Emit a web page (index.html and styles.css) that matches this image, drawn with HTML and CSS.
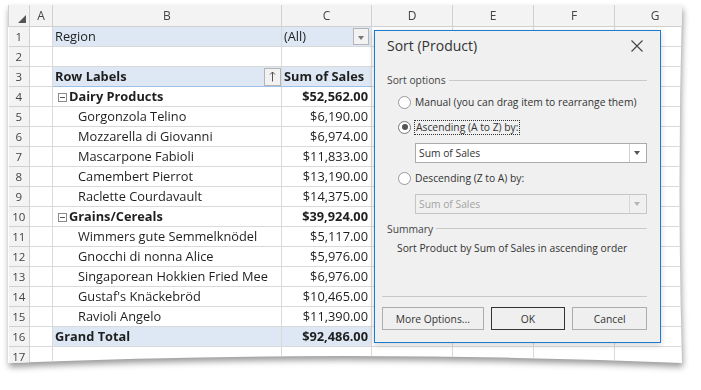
FILE: index.html
```html
<!DOCTYPE html>
<html>
<head>
<meta charset="utf-8">
<link rel="stylesheet" href="styles.css">
</head>
<body>
<div class="stage">
  <div class="paper">
    <div class="sheet">
      <table class="grid">
        <colgroup>
          <col class="c-num"><col class="c-a"><col class="c-b"><col class="c-c"><col class="c-d"><col class="c-d"><col class="c-d"><col class="c-d">
        </colgroup>
        <thead>
          <tr><th class="corner"><span class="tri"></span></th><th>A</th><th>B</th><th>C</th><th>D</th><th>E</th><th>F</th><th>G</th></tr>
        </thead>
        <tbody>
          <tr><th>1</th><td></td><td class="pv">Region</td><td class="pv pv-r"><span class="flt">(All)</span><span class="ddbtn"><span class="dtri"></span></span></td><td></td><td></td><td></td><td></td></tr>
          <tr><th>2</th><td></td><td></td><td></td><td></td><td></td><td></td><td></td></tr>
          <tr class="hdr"><th>3</th><td></td><td class="pv b"><span class="flt">Row Labels</span><span class="sortbtn"><svg width="7" height="11" viewBox="0 0 7 11"><path d="M3.5 1V10.5M1 3.5L3.5 1L6 3.5" stroke="#555" stroke-width="1" fill="none"/></svg></span></td><td class="pv b">Sum of Sales</td><td></td><td></td><td></td><td></td></tr>
          <tr class="cat"><th>4</th><td></td><td class="b"><span class="tog"></span>Dairy Products</td><td class="b num">$52,562.00</td><td></td><td></td><td></td><td></td></tr>
          <tr><th>5</th><td></td><td class="item">Gorgonzola Telino</td><td class="num">$6,190.00</td><td></td><td></td><td></td><td></td></tr>
          <tr><th>6</th><td></td><td class="item">Mozzarella di Giovanni</td><td class="num">$6,974.00</td><td></td><td></td><td></td><td></td></tr>
          <tr><th>7</th><td></td><td class="item">Mascarpone Fabioli</td><td class="num">$11,833.00</td><td></td><td></td><td></td><td></td></tr>
          <tr><th>8</th><td></td><td class="item">Camembert Pierrot</td><td class="num">$13,190.00</td><td></td><td></td><td></td><td></td></tr>
          <tr><th>9</th><td></td><td class="item">Raclette Courdavault</td><td class="num">$14,375.00</td><td></td><td></td><td></td><td></td></tr>
          <tr class="cat"><th>10</th><td></td><td class="b"><span class="tog"></span>Grains/Cereals</td><td class="b num">$39,924.00</td><td></td><td></td><td></td><td></td></tr>
          <tr><th>11</th><td></td><td class="item">Wimmers gute Semmelknödel</td><td class="num">$5,117.00</td><td></td><td></td><td></td><td></td></tr>
          <tr><th>12</th><td></td><td class="item">Gnocchi di nonna Alice</td><td class="num">$5,976.00</td><td></td><td></td><td></td><td></td></tr>
          <tr><th>13</th><td></td><td class="item">Singaporean Hokkien Fried Mee</td><td class="num">$6,976.00</td><td></td><td></td><td></td><td></td></tr>
          <tr><th>14</th><td></td><td class="item">Gustaf's Knäckebröd</td><td class="num">$10,465.00</td><td></td><td></td><td></td><td></td></tr>
          <tr><th>15</th><td></td><td class="item">Ravioli Angelo</td><td class="num">$11,390.00</td><td></td><td></td><td></td><td></td></tr>
          <tr class="tot"><th>16</th><td></td><td class="pv b">Grand Total</td><td class="pv b num">$92,486.00</td><td></td><td></td><td></td><td></td></tr>
          <tr><th>17</th><td></td><td></td><td></td><td></td><td></td><td></td><td></td></tr>
        </tbody>
      </table>
    </div>
  </div>

  <div class="dialog">
    <div class="d-title">
      <span>Sort (Product)</span>
      <svg class="d-close" width="12" height="12" viewBox="0 0 12 12"><path d="M0.5 0.5L11.5 11.5M11.5 0.5L0.5 11.5" stroke="#444" stroke-width="1.1" fill="none"/></svg>
    </div>
    <div class="grp"><span>Sort options</span><i></i></div>
    <div class="radio r1"><span class="rb"></span><span>Manual (you can drag item to rearrange them)</span></div>
    <div class="radio r2"><span class="rb on"></span><span class="focus">Ascending (A to Z) by:</span></div>
    <div class="combo"><span class="cv">Sum of Sales</span><span class="cbtn"><span class="ctri"></span></span></div>
    <div class="radio r3"><span class="rb"></span><span>Descending (Z to A) by:</span></div>
    <div class="combo dis"><span class="cv">Sum of Sales</span><span class="cbtn"><span class="ctri"></span></span></div>
    <div class="grp g2"><span>Summary</span><i></i></div>
    <div class="sum">Sort Product by Sum of Sales in ascending order</div>
    <div class="foot">
      <div class="sep"></div>
      <div class="btns">
        <span class="btn more">More Options...</span>
        <span class="btn ok">OK</span>
        <span class="btn">Cancel</span>
      </div>
    </div>
  </div>
</div>
</body>
</html>
```

FILE: styles.css
```css
* { box-sizing: border-box; }
html, body { margin: 0; padding: 0; background: #fff; }
body { width: 701px; height: 390px; overflow: hidden; }

.stage { position: relative; width: 701px; height: 390px; padding: 5px 0 0 8px; }

.paper { filter: drop-shadow(1px 4px 3px rgba(0,0,0,0.4)); width: 674px; height: 360px; }
.sheet {
  width: 674px; height: 360px; background: #fff; overflow: hidden;
  clip-path: path("M0 0 H674 Q669 180 674 358 Q337 344 0 358 Z");
}

.grid {
  border-collapse: collapse; table-layout: fixed; width: 687px;
  font-family: "Open Sans", "Noto Sans", sans-serif; font-size: 12.8px; color: #1e1e1e;
}
.c-num { width: 21px; } .c-a { width: 23px; } .c-b { width: 229px; } .c-c { width: 90px; } .c-d { width: 81px; }

.grid th, .grid td { border: 1px solid #d9d9d9; padding: 0; white-space: nowrap; overflow: hidden; }
.grid thead th { height: 21px; background: #f3f3f3; font-weight: normal; color: #444; font-size: 12px; text-align: center; border-color: #d0d0d0; border-top: none; }
.grid tbody th { height: 20px; background: #f3f3f3; font-weight: normal; color: #444; font-size: 11.5px; text-align: center; border-color: #d0d0d0; border-left: none; }
.grid td { height: 20px; padding: 0 2px; line-height: 18px; }

.corner { position: relative; }
.tri { position: absolute; right: 3px; bottom: 3px; width: 0; height: 0; border-left: 8px solid transparent; border-bottom: 8px solid #555; }

.pv { background: #dde8f4; }
.b { font-weight: bold; }
.num { text-align: right; padding-right: 3px !important; }
.item { padding-left: 25px !important; }

.pv-r { position: relative; }
.flt { display: inline-block; }
.ddbtn { position: absolute; right: 2px; top: 1px; width: 16px; height: 17px; border: 1px solid #b5b5b5; background: #f2f2f2; }
.dtri { position: absolute; left: 4px; top: 7px; border-left: 3.5px solid transparent; border-right: 3.5px solid transparent; border-top: 4px solid #777; }
.hdr td.pv:nth-child(3) { position: relative; }
.sortbtn { position: absolute; right: 0; top: 1px; width: 17px; height: 18px; border: 1px solid #b5b5b5; background: #f2f2f2; display: flex; align-items: center; justify-content: center; }

.hdr td.pv { border-bottom: 1px solid #9fc0e4; }
.cat td:nth-child(3), .cat td:nth-child(4) { border-top: 1px solid #a9c6e8; }
.tot td.pv { border-top: 1px solid #9fc0e4; }

.tog { display: inline-block; width: 9px; height: 9px; border: 1px solid #8a8a8a; margin: 0 2px 0 3px; position: relative; vertical-align: -1px; }
.tog::after { content: ""; position: absolute; left: 1px; right: 1px; top: 3px; height: 1px; background: #555; }

/* dialog */
.dialog {
  position: absolute; left: 374px; top: 30px; width: 287px; height: 313px;
  background: #f0f0f0; border: 1px solid #1c7ad0;
  box-shadow: 0 2px 6px rgba(0,0,0,0.18);
  font-family: "Open Sans", "Noto Sans", sans-serif; font-size: 10.3px; color: #333;
  display: flex; flex-direction: column;
}
.d-title { height: 30px; line-height: 30px; padding-left: 12px; font-size: 14px; color: #333; position: relative; }
.d-close { position: absolute; left: 256px; top: 9px; }

.grp { height: 20px; margin-top: 9px; padding-left: 12px; padding-right: 13px; display: flex; align-items: center; gap: 3px; color: #444; }
.grp i { flex: 1; height: 1px; background: #c9c9c9; }
.g2 { margin-top: 5px; height: 19px; }

.radio { height: 20px; display: flex; align-items: center; padding-left: 23px; gap: 4px; color: #333; }
.r1 { margin-top: 2px; }
.r2 { margin-top: 5px; }
.r3 { margin-top: 5px; }
.rb { width: 13px; height: 13px; border-radius: 50%; border: 1px solid #999; background: #fff; position: relative; flex: none; }
.rb.on { border-color: #777; }
.rb.on::after { content: ""; position: absolute; left: 2.5px; top: 2.5px; width: 6px; height: 6px; border-radius: 50%; background: #555; }
.focus { outline: 1px dotted #333; outline-offset: 0; padding: 0 1px; line-height: 13px; }

.combo { margin: 6px 0 0 40px; width: 232px; height: 20px; border: 1px solid #ababab; background: #fff; display: flex; align-items: center; }
.cv { flex: 1; padding-left: 3px; color: #333; }
.cbtn { width: 17px; height: 18px; border-left: 1px solid #d0d0d0; position: relative; }
.ctri { position: absolute; left: 4px; top: 7px; border-left: 3.5px solid transparent; border-right: 3.5px solid transparent; border-top: 4px solid #555; }
.combo.dis { background: #f0f0f0; border-color: #c6c6c6; }
.combo.dis .cv { color: #a3a3a3; }
.combo.dis .cbtn { border-left-color: #d8d8d8; }
.combo.dis .ctri { border-top-color: #b5b5b5; }

.sum { height: 20px; line-height: 20px; padding-left: 22px; color: #333; }

.foot { margin-top: auto; padding: 0 13px 12px 7px; }
.sep { height: 1px; background: #c9c9c9; margin-bottom: 10px; }
.btns { display: flex; gap: 7px; }
.btn { height: 23px; width: 75px; border: 1px solid #adadad; background: #efefef; display: flex; align-items: center; justify-content: center; color: #333; }
.btn.more { width: 102px; }
.btn.ok { border-color: #333; }
```
